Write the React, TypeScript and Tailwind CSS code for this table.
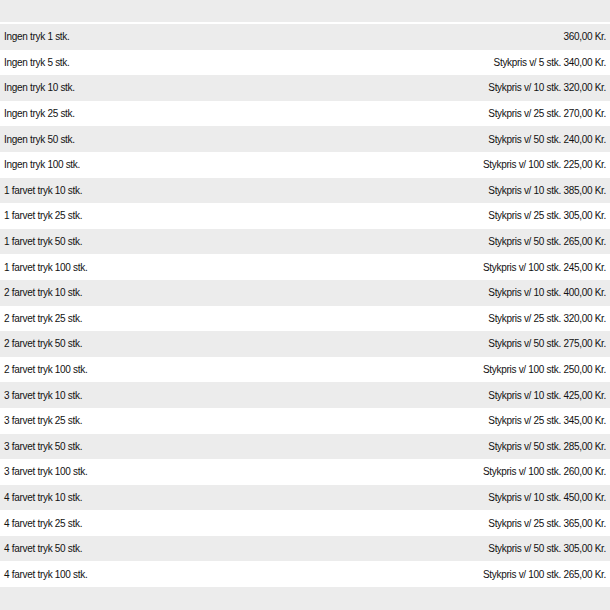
import React from 'react';

const rows: [string, string][] = [
  ['Ingen tryk 1 stk.', '360,00 Kr.'],
  ['Ingen tryk 5 stk.', 'Stykpris v/ 5 stk. 340,00 Kr.'],
  ['Ingen tryk 10 stk.', 'Stykpris v/ 10 stk. 320,00 Kr.'],
  ['Ingen tryk 25 stk.', 'Stykpris v/ 25 stk. 270,00 Kr.'],
  ['Ingen tryk 50 stk.', 'Stykpris v/ 50 stk. 240,00 Kr.'],
  ['Ingen tryk 100 stk.', 'Stykpris v/ 100 stk. 225,00 Kr.'],
  ['1 farvet tryk 10 stk.', 'Stykpris v/ 10 stk. 385,00 Kr.'],
  ['1 farvet tryk 25 stk.', 'Stykpris v/ 25 stk. 305,00 Kr.'],
  ['1 farvet tryk 50 stk.', 'Stykpris v/ 50 stk. 265,00 Kr.'],
  ['1 farvet tryk 100 stk.', 'Stykpris v/ 100 stk. 245,00 Kr.'],
  ['2 farvet tryk 10 stk.', 'Stykpris v/ 10 stk. 400,00 Kr.'],
  ['2 farvet tryk 25 stk.', 'Stykpris v/ 25 stk. 320,00 Kr.'],
  ['2 farvet tryk 50 stk.', 'Stykpris v/ 50 stk. 275,00 Kr.'],
  ['2 farvet tryk 100 stk.', 'Stykpris v/ 100 stk. 250,00 Kr.'],
  ['3 farvet tryk 10 stk.', 'Stykpris v/ 10 stk. 425,00 Kr.'],
  ['3 farvet tryk 25 stk.', 'Stykpris v/ 25 stk. 345,00 Kr.'],
  ['3 farvet tryk 50 stk.', 'Stykpris v/ 50 stk. 285,00 Kr.'],
  ['3 farvet tryk 100 stk.', 'Stykpris v/ 100 stk. 260,00 Kr.'],
  ['4 farvet tryk 10 stk.', 'Stykpris v/ 10 stk. 450,00 Kr.'],
  ['4 farvet tryk 25 stk.', 'Stykpris v/ 25 stk. 365,00 Kr.'],
  ['4 farvet tryk 50 stk.', 'Stykpris v/ 50 stk. 305,00 Kr.'],
  ['4 farvet tryk 100 stk.', 'Stykpris v/ 100 stk. 265,00 Kr.'],
];

export default function App() {
  return (
    <div className="w-[610px] h-[610px] bg-[#ececec] text-[10px] tracking-[-0.3px] text-[#111] font-['Liberation_Sans',Arial,sans-serif] overflow-hidden">
      <div className="h-[22px]" />
      <div className="h-[2px] bg-white" />
      <div className="flex flex-col">
        {rows.map(([label, price], i) => (
          <div
            key={label}
            className={`h-[25.6px] flex items-center justify-between px-[4px] ${i % 2 === 0 ? 'bg-[#ececec]' : 'bg-white'}`}
          >
            <span>{label}</span>
            <span>{price}</span>
          </div>
        ))}
      </div>
    </div>
  );
}
